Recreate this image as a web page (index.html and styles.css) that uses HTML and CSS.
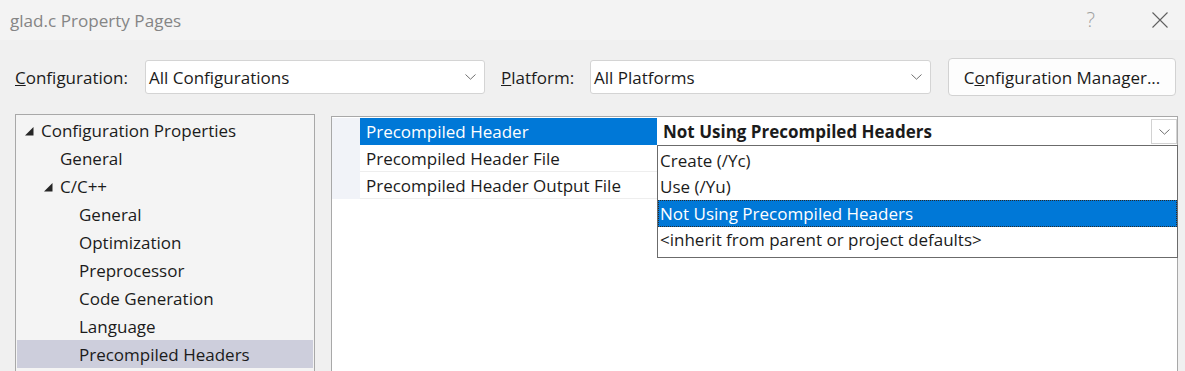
FILE: index.html
```html
<!DOCTYPE html>
<html>
<head>
<meta charset="utf-8">
<link rel="stylesheet" href="styles.css">
</head>
<body>
<div class="window">
  <div class="titlebar">
    <span class="title">glad.c Property Pages</span>
    <span class="help">?</span>
    <svg class="close" width="16" height="16" viewBox="0 0 16 16"><path d="M0.5 0.5 L15.5 15.5 M15.5 0.5 L0.5 15.5" stroke="#5f5f5f" stroke-width="1.1" fill="none"/></svg>
  </div>
  <div class="toolbar">
    <label class="lbl lbl-config"><u>C</u>onfiguration:</label>
    <div class="combo combo-config">
      <span>All Configurations</span>
      <svg class="chev" width="11" height="6" viewBox="0 0 11 6"><path d="M0.5 0.5 L5.5 5.2 L10.5 0.5" stroke="#707070" fill="none"/></svg>
    </div>
    <label class="lbl lbl-platform"><u>P</u>latform:</label>
    <div class="combo combo-platform">
      <span>All Platforms</span>
      <svg class="chev" width="11" height="6" viewBox="0 0 11 6"><path d="M0.5 0.5 L5.5 5.2 L10.5 0.5" stroke="#707070" fill="none"/></svg>
    </div>
    <button class="btn">C<u>o</u>nfiguration Manager...</button>
  </div>
  <div class="main">
    <div class="tree">
      <div class="node l0"><span class="tog"><svg width="9" height="9" viewBox="0 0 9 9"><path d="M8.5 0 L8.5 8.5 L0 8.5 Z" fill="#262626"/></svg></span>Configuration Properties</div>
      <div class="node l1"><span class="tog"></span>General</div>
      <div class="node l1"><span class="tog"><svg width="9" height="9" viewBox="0 0 9 9"><path d="M8.5 0 L8.5 8.5 L0 8.5 Z" fill="#262626"/></svg></span>C/C++</div>
      <div class="node l2"><span class="tog"></span>General</div>
      <div class="node l2"><span class="tog"></span>Optimization</div>
      <div class="node l2"><span class="tog"></span>Preprocessor</div>
      <div class="node l2"><span class="tog"></span>Code Generation</div>
      <div class="node l2"><span class="tog"></span>Language</div>
      <div class="node l2 sel"><span class="tog"></span>Precompiled Headers</div>
    </div>
    <div class="props">
      <div class="grid">
        <div class="gut"></div>
        <div class="name active">Precompiled Header</div>
        <div class="val">
          <b>Not Using Precompiled Headers</b>
          <span class="dropbtn"><svg width="11" height="6" viewBox="0 0 11 6"><path d="M0.5 0.5 L5.5 5.2 L10.5 0.5" stroke="#707070" fill="none"/></svg></span>
        </div>
        <div class="gut"></div>
        <div class="name">Precompiled Header File</div>
        <div class="val plain"></div>
        <div class="gut"></div>
        <div class="name">Precompiled Header Output File</div>
        <div class="val plain"></div>
      </div>
      <ul class="list">
        <li>Create (/Yc)</li>
        <li>Use (/Yu)</li>
        <li class="cur">Not Using Precompiled Headers</li>
        <li>&lt;inherit from parent or project defaults&gt;</li>
      </ul>
    </div>
  </div>
</div>
</body>
</html>
```

FILE: styles.css
```css
* { box-sizing: border-box; }
html, body { margin: 0; padding: 0; }
body {
  width: 1185px;
  height: 371px;
  overflow: hidden;
  background: #f0f0f0;
  font-family: "Open Sans", "Noto Sans", sans-serif;
  font-size: 17px;
  color: #1b1b1b;
}
.window { width: 1185px; }

.titlebar {
  height: 40px;
  display: flex;
  align-items: center;
  padding-left: 10px;
  padding-right: 17px;
  background: #f3f3f3;
}
.title { font-size: 17.1px; color: #858585; }
.help { margin-left: auto; margin-right: 57px; font-size: 20px; color: #a0a0a0; font-weight: 300; line-height: 1; }
.close { display: block; }

.toolbar {
  margin-top: 18px;
  height: 38px;
  display: flex;
  align-items: center;
  padding-left: 15px;
}
.lbl { display: block; line-height: 1; }
.lbl-config { width: 130px; }
.lbl-platform { width: 89px; margin-left: 16px; }
.combo {
  height: 34px;
  background: #fff;
  border: 1px solid #d4d4d4;
  border-radius: 3px;
  display: flex;
  align-items: center;
  padding-left: 3px;
  padding-right: 8px;
}
.combo span { flex: 1; }
.combo-config { width: 340px; }
.combo-platform { width: 341px; }
.chev { display: block; }
.btn {
  margin-left: 17px;
  width: 228px;
  height: 38px;
  background: #fdfdfd;
  border: 1px solid #d2d2d2;
  border-radius: 4px;
  font: inherit;
  color: #1b1b1b;
  padding: 0;
}

.main {
  margin-top: 18px;
  display: flex;
  align-items: flex-start;
  padding-left: 15px;
  gap: 16px;
}
.tree {
  width: 300px;
  height: 280px;
  border: 1px solid #a8a8a8;
  background: #f4f4f4;
  padding: 1px 1px 0 1px;
}
.node {
  height: 28px;
  display: flex;
  align-items: center;
  white-space: nowrap;
}
.node.l0 { padding-left: 8px; }
.node.l1 { padding-left: 27px; }
.node.l2 { padding-left: 46px; }
.tog { width: 16px; height: 28px; display: flex; align-items: center; padding-top: 2px; flex: none; }
.tog svg { display: block; }
.node.sel { background: #cdcedc; }

.props {
  position: relative;
  margin-top: 2px;
  width: 847px;
  height: 280px;
  border: 1px solid #a8a8a8;
  background: #fff;
  padding-top: 1px;
}
.grid {
  display: grid;
  grid-template-columns: 28px 297px 1fr;
  grid-auto-rows: 27px;
}
.gut { background: #f1f3f8; }
.name {
  padding-left: 6px;
  display: flex;
  align-items: center;
  border-bottom: 1px solid #eeeeee;
  white-space: nowrap;
}
.name.active { background: #0078d7; color: #fff; border-bottom: none; }
.val {
  display: flex;
  align-items: center;
  padding-left: 6px;
  padding-right: 0;
}
.val b { flex: 1; font-weight: 700; font-size: 17px; }
.dropbtn {
  width: 26px;
  height: 25px;
  border: 1px solid #d2d2d2;
  background: #fff;
  display: flex;
  align-items: center;
  justify-content: center;
}
.dropbtn svg { display: block; }

.list {
  position: absolute;
  left: 325px;
  top: 28px;
  width: 521px;
  height: 113px;
  margin: 0;
  padding: 1px 0 0 0;
  list-style: none;
  background: #fff;
  border: 1px solid #6b6b6b;
}
.list li {
  height: 26.5px;
  display: flex;
  align-items: center;
  padding-left: 2px;
  white-space: nowrap;
}
.list li.cur {
  background: #0078d7;
  color: #fff;
  outline: 1px dotted #2a2a2a;
  outline-offset: -1px;
}
```
